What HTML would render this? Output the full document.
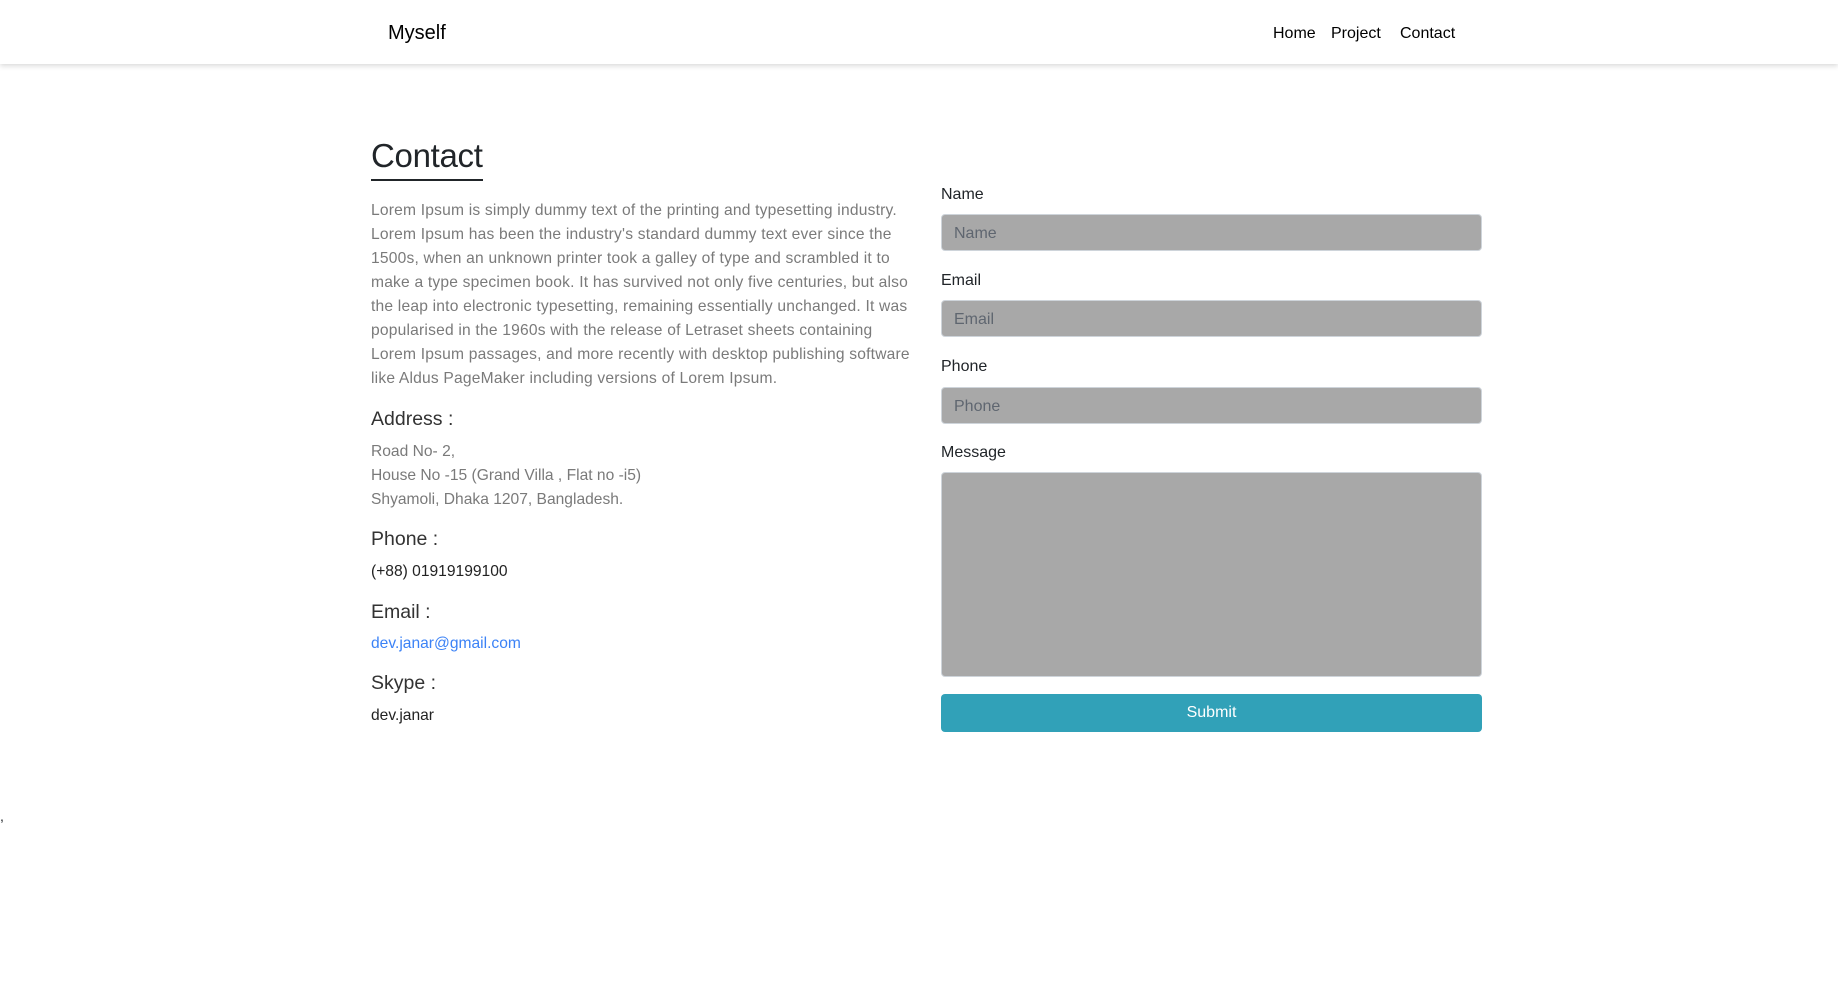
<!DOCTYPE html>
<html><head><meta charset="utf-8"><style>
*{margin:0;padding:0;box-sizing:border-box}
body{width:1838px;height:981px;background:#fff;font-family:"Liberation Sans",sans-serif;color:#212529;position:relative;overflow:hidden}
.nav{position:absolute;left:0;top:0;width:1838px;height:64px;background:#fff;box-shadow:0 2px 5px rgba(0,0,0,.15)}
.a{position:absolute;white-space:nowrap}
.brand{left:388px;top:22px;font-size:20px;color:#000}
.lnk{top:25px;font-size:16px;color:#000}
h1{position:absolute;left:371px;top:136px;font-size:33px;font-weight:normal;line-height:40px;color:#212529;border-bottom:2px solid #212529;padding-bottom:3px;letter-spacing:-0.3px}
.p{left:371px;top:199px;font-size:15.6px;line-height:24px;color:#7a7a7a;letter-spacing:0.2px}
.h{left:371px;font-size:19.5px;color:#333}
.t{left:371px;font-size:15.6px;line-height:24px;color:#7a7a7a}
.d{left:371px;font-size:15.6px;color:#222}
.lab{left:941px;font-size:16px;color:#212529}
.in{position:absolute;left:941px;width:541px;height:37px;background:#a8a8a8;border:1px solid #ced4da;border-radius:4px;font-size:16px;color:#5f6670;padding:9px 12px;line-height:20px}
.btn{position:absolute;left:941px;top:694px;width:541px;height:38px;background:#31a1b8;border-radius:4px;color:#fff;font-size:16px;text-align:center;line-height:38px}
</style></head><body>
<div class="nav">
<div class="a brand">Myself</div>
<div class="a lnk" style="left:1273px">Home</div>
<div class="a lnk" style="left:1331px">Project</div>
<div class="a lnk" style="left:1400px">Contact</div>
</div>
<h1>Contact</h1>
<div class="a p">Lorem Ipsum is simply dummy text of the printing and typesetting industry.<br>Lorem Ipsum has been the industry's standard dummy text ever since the<br>1500s, when an unknown printer took a galley of type and scrambled it to<br>make a type specimen book. It has survived not only five centuries, but also<br>the leap into electronic typesetting, remaining essentially unchanged. It was<br>popularised in the 1960s with the release of Letraset sheets containing<br>Lorem Ipsum passages, and more recently with desktop publishing software<br>like Aldus PageMaker including versions of Lorem Ipsum.</div>
<div class="a h" style="top:408px">Address :</div>
<div class="a t" style="top:440px">Road No- 2,<br>House No -15 (Grand Villa , Flat no -i5)<br>Shyamoli, Dhaka 1207, Bangladesh.</div>
<div class="a h" style="top:528px">Phone :</div>
<div class="a d" style="top:563px">(+88) 01919199100</div>
<div class="a h" style="top:601px">Email :</div>
<div class="a d" style="top:635px;color:#3b82f6">dev.janar@gmail.com</div>
<div class="a h" style="top:672px">Skype :</div>
<div class="a d" style="top:707px">dev.janar</div>

<div class="a lab" style="top:186px">Name</div>
<div class="in" style="top:214px">Name</div>
<div class="a lab" style="top:272px">Email</div>
<div class="in" style="top:300px">Email</div>
<div class="a lab" style="top:358px">Phone</div>
<div class="in" style="top:387px">Phone</div>
<div class="a lab" style="top:444px">Message</div>
<div class="in" style="top:472px;height:205px"></div>
<div class="btn">Submit</div>
<div class="a" style="left:0;top:808px;font-size:14px">,</div>
</body></html>
